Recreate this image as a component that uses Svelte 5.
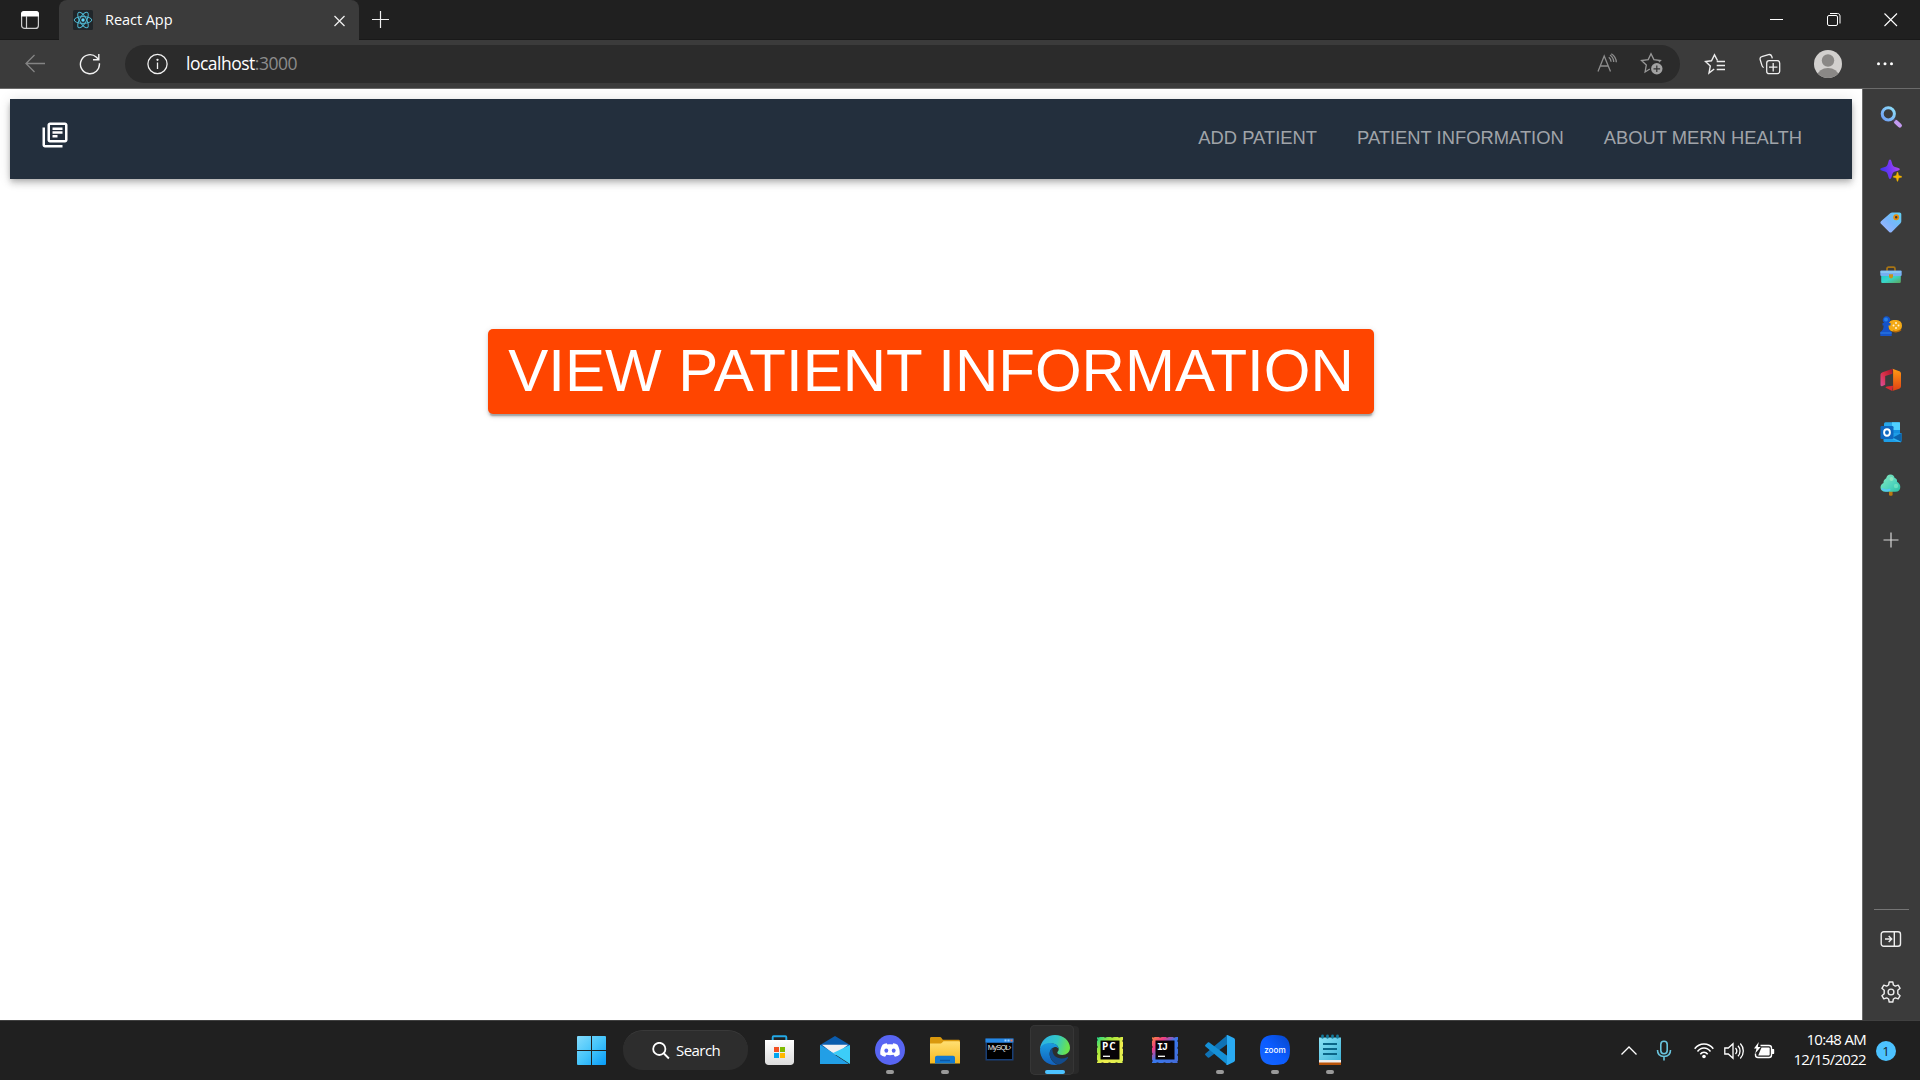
<script>
  const links = ['Add Patient', 'Patient Information', 'About MERN Health'];
  const sideApps = ['search', 'discover', 'shopping', 'tools', 'games', 'office', 'outlook', 'drop', 'add'];
  const taskApps = [
    { id: 'store' },
    { id: 'mail' },
    { id: 'discord', open: true },
    { id: 'files', open: true },
    { id: 'mysql' },
    { id: 'edge', active: true },
    { id: 'pycharm' },
    { id: 'intellij' },
    { id: 'vscode', open: true },
    { id: 'zoom', open: true },
    { id: 'notepad', open: true }
  ];
</script>

{#snippet sideIcon(id)}
  <svg width="24" height="24" viewBox="0 0 24 24" fill="none">
    {#if id === 'search'}
      <defs><linearGradient id="sg" x1="0" y1="1" x2="1" y2="0"><stop stop-color="#6f9df5" /><stop offset="1" stop-color="#8fe0fa" /></linearGradient></defs>
      <path d="M17 17l3.800 3.600" stroke="#c39af0" stroke-width="4.200" stroke-linecap="round" />
      <path d="M14 14l2 1.900" stroke="#4a4560" stroke-width="3" />
      <circle cx="9.300" cy="8.800" r="6.100" stroke="url(#sg)" stroke-width="3" />
    {:else if id === 'discover'}
      <defs><linearGradient id="dg" x1="0" y1=".6" x2="1" y2=".4"><stop stop-color="#3a35ef" /><stop offset=".5" stop-color="#7437f5" /><stop offset="1" stop-color="#b04af0" /></linearGradient></defs>
      <path d="M11 .5c1 0 1.300 1 2 3.700.6 2.400 1.400 3.300 4 4 2.700.7 3.700 1 3.700 2s-1 1.300-3.700 2c-2.600.7-3.400 1.600-4 4-.7 2.700-1 3.700-2 3.700s-1.300-1-2-3.700c-.6-2.400-1.400-3.300-4-4-2.700-.7-3.700-1-3.700-2s1-1.300 3.700-2c2.600-.7 3.400-1.600 4-4C9.700 1.500 10 .5 11 .5z" fill="url(#dg)" />
      <path d="M18.500 13c.6 0 .8 3 1.300 3.500.5.500 3.200.7 3.200 1.300s-2.700.8-3.200 1.300c-.5.500-.7 3.400-1.300 3.400s-.8-2.900-1.300-3.400c-.5-.5-3.200-.7-3.200-1.300s2.700-.8 3.200-1.300c.5-.5.7-3.500 1.300-3.500z" fill="#f4b400" stroke="#f4b400" stroke-width=".4" />
    {:else if id === 'shopping'}
      <defs><linearGradient id="tg" x1="1" y1="0" x2="0" y2="1"><stop stop-color="#5fd0ee" /><stop offset=".5" stop-color="#78b5fb" /><stop offset="1" stop-color="#a9b5ff" /></linearGradient></defs>
      <path d="M13.200 2.500h7.300c1 0 1.800.8 1.800 1.800v7c0 .8-.2 1.300-.8 1.900l-8.700 8.700c-.8.800-1.800.8-2.600 0L2 13.800c-.8-.8-.8-1.800 0-2.600l9.200-8c.6-.5 1.200-.7 2-.7z" fill="url(#tg)" />
      <circle cx="17.200" cy="7.200" r="2.100" fill="#3b3b3b" stroke="#e88d08" stroke-width="1.700" />
    {:else if id === 'tools'}
      <defs><linearGradient id="bg" x1="0" y1="0" x2="1" y2="1"><stop stop-color="#1fc9d4" /><stop offset=".5" stop-color="#38d6c9" /><stop offset="1" stop-color="#5da65a" /></linearGradient></defs>
      <path d="M8 8V5.800c0-1 .6-1.600 1.600-1.600h4.800c1 0 1.600.6 1.600 1.600V8" stroke="#a87414" stroke-width="1.700" />
      <path d="M2.200 11h19.600v7.700c0 .8-.5 1.300-1.300 1.300h-17c-.8 0-1.300-.5-1.300-1.300z" fill="url(#bg)" />
      <rect x="1.300" y="7.500" width="21.400" height="5.500" rx="1" fill="#76aef2" />
      <path d="M1.600 9h20" stroke="#8ccdf4" stroke-width="1.500" />
      <path d="M10 11.300h4v2.200a2 2 0 0 1-4 0z" fill="#ca911a" />
    {:else if id === 'games'}
      <rect x="9" y="5" width="14" height="11.500" rx="5.500" fill="#f3a916" />
      <path d="M14 16c2 1 6 1 8-1.500" stroke="#bb6c07" stroke-width="1.500" />
      <g fill="#fff3cf"><circle cx="17" cy="8" r="1" /><circle cx="17" cy="13" r="1" /><circle cx="14.500" cy="10.500" r="1" /><circle cx="19.500" cy="10.500" r="1" /></g>
      <path d="M3.500 8h1.700a3.800 3.800 0 1 1 4.600 0h1.700v2.500h-2c0 3.500.7 5 3.200 6.500v4H1.300v-4c2.500-1.500 3.300-3 3.300-6.500H3.500z" fill="#1553c9" />
      <circle cx="7" cy="4.500" r="2" fill="#2480e8" />
      <path d="M1.300 18h11.400" stroke="#2672df" stroke-width="1.500" />
    {:else if id === 'office'}
      <defs><linearGradient id="og" x1="0" y1="1" x2="1" y2="0"><stop stop-color="#d94f9d" /><stop offset=".5" stop-color="#d92f46" /><stop offset="1" stop-color="#a0142b" /></linearGradient><linearGradient id="og2" x1="0" y1="0" x2="0" y2="1"><stop stop-color="#ff9b12" /><stop offset="1" stop-color="#df3f14" /></linearGradient></defs>
      <path d="M13.500.8L3.600 4.200C2.300 4.600 1.500 5.500 1.500 7v9.500c0 1.400.7 2 2 1.500l2.700-1.200V8l7.300-2.300z" fill="url(#og)" />
      <path d="M6.300 19.500l6.900 3.400.9-5.200-6.400.8z" fill="#d92b35" />
      <path d="M13.500.8l6.800 2.400c1 .4 1.700 1.200 1.700 2.300v12.800c0 1.200-.7 2-1.800 2.400l-7 2.200c.7-.5.900-1 .9-2V3c0-1-.1-1.700-.6-2.200z" fill="url(#og2)" />
    {:else if id === 'outlook'}
      <rect x="5" y="2.300" width="16" height="17" rx="1.500" fill="#28a8ea" />
      <path d="M13 2.300h8v8h-8z" fill="#50d0ff" /><path d="M13 10h8v5h-8z" fill="#1490df" />
      <path d="M4.500 13h18v7.500c0 1-.6 1.600-1.600 1.600H6c-1 0-1.500-.6-1.500-1.600z" fill="#1d9ee8" />
      <path d="M22.500 13v9L14 17.500z" fill="#0a64ad" /><path d="M4.500 15l17 7" stroke="#35b8f1" />
      <rect x="1.500" y="6" width="13" height="13" rx="1.200" fill="#0f68c0" />
      <ellipse cx="8" cy="12.500" rx="2.900" ry="3.200" stroke="#fff" stroke-width="1.900" />
    {:else if id === 'drop'}
      <defs><linearGradient id="trg" x1="0" y1="0" x2="1" y2="1"><stop stop-color="#8beabc" /><stop offset=".6" stop-color="#4ed4bd" /><stop offset="1" stop-color="#2cbfa0" /></linearGradient></defs>
      <rect x="10" y="16" width="3.600" height="6.800" rx="1.200" fill="#b87812" />
      <path d="M11.500 1.500c2.300 0 3.800 1.300 4 3.300 2 .7 2.900 2.200 2.500 4 2 1 3.300 3 3.300 5.200 0 2.800-1.800 4.800-4.800 4.800H6.300C3.400 18.800 1.500 17 1.500 14.500c0-2.200 1.200-3.900 3-4.600-.2-2 .7-3.500 2.700-4.600.4-2.300 2-3.800 4.300-3.800z" fill="url(#trg)" />
      <path d="M3.500 16c2 2 5 1.500 7 .7" stroke="#57c8f2" stroke-width="2" stroke-linecap="round" />
      <circle cx="12.500" cy="6" r="2" fill="#aef2c6" opacity=".6" /><circle cx="17" cy="13" r="2.200" fill="#83edc8" opacity=".6" />
    {:else}
      <path d="M12 4.500v15M4.500 12h15" stroke="#d8d8d8" stroke-width="1.200" />
    {/if}
  </svg>
{/snippet}

{#snippet taskIcon(id)}
  <svg width="32" height="32" viewBox="0 0 32 32" fill="none">
    {#if id === 'store'}
      <defs><linearGradient id="stg" x1="0" y1="0" x2="0" y2="1"><stop stop-color="#fff" /><stop offset="1" stop-color="#dcdcdc" /></linearGradient></defs>
      <path d="M8.700 7.500V3.200c0-.6.300-.9.900-.9h11.800c.6 0 .9.300.9.900v4.300" stroke="#23a9e6" stroke-width="1.900" />
      <path d="M1 6h29v21.500c0 2-1.500 3.500-3.500 3.500h-22C2.500 31 1 29.500 1 27.500z" fill="url(#stg)" />
      <path fill="#f25022" d="M10 13h5v5h-5z" /><path fill="#7fba00" d="M16 13h5v5h-5z" /><path fill="#00a4ef" d="M10 19h5v5h-5z" /><path fill="#ffb900" d="M16 19h5v5h-5z" />
    {:else if id === 'mail'}
      <path d="M1 11L16 2 31 11v6H1z" fill="#0b5cad" />
      <path d="M3 10.800h26L16 21z" fill="#f2f0f2" />
      <path d="M1 11l15 9-15 10z" fill="#27a8ec" /><path d="M31 11v19L14 19z" fill="#3ccdf8" />
      <path d="M1 30V11l29 19z" fill="#229fe6" />
    {:else if id === 'discord'}
      <circle cx="16" cy="16" r="15" fill="#5865f2" />
      <path d="M12.800 9.200c-1.700.3-3.200.8-4.300 1.500-1.700 2.800-2.500 6-2.200 9.700 1.300 1.100 2.900 1.900 4.800 2.400l1.300-2c2.300.5 4.900.5 7.200 0l1.300 2c1.900-.5 3.500-1.300 4.800-2.400.3-3.700-.5-6.900-2.200-9.700-1.100-.7-2.600-1.200-4.300-1.500l-.7 1.300c-1.700-.2-3.300-.2-5 0z" fill="#fff" />
      <ellipse cx="12.300" cy="16.600" rx="1.900" ry="2.200" fill="#5865f2" /><ellipse cx="19.700" cy="16.600" rx="1.900" ry="2.200" fill="#5865f2" />
    {:else if id === 'files'}
      <defs><linearGradient id="fg" x1="0" y1="0" x2="0" y2="1"><stop stop-color="#ffdf73" /><stop offset="1" stop-color="#f7b91e" /></linearGradient></defs>
      <path d="M1 12V4.500C1 3.500 1.500 3 2.500 3h8c1 0 1.500.3 2 1l1.300 1.700h15.700c1 0 1.500.5 1.500 1.500V12z" fill="#d9980d" />
      <path d="M1 9.500h10c1 0 1.500-.3 2.200-1l1.300-1.300h15c1 0 1.500.5 1.500 1.500v20.800H1z" fill="url(#fg)" />
      <path d="M6 29.500v-5.800c0-1.200.8-2 2-2h16c1.200 0 2 .8 2 2v5.800z" fill="#1379d1" /><path d="M11 26.500h10" stroke="#0b58a5" stroke-width="1.500" />
    {:else if id === 'mysql'}
      <rect x="1.500" y="4.500" width="28" height="22" fill="#183e76" /><path d="M1.500 4.500h28v4h-28z" fill="#2588e5" />
      <rect x="3" y="9" width="25" height="16" fill="#000" />
      <path d="M20.500 5.500h2v2h-2zM23.500 5.500h2v2h-2z" fill="#9ed0ff" /><path d="M26.500 5.500h2v2h-2z" fill="#f0744f" />
      <text x="3.800" y="16.300" font-family="Liberation Sans, sans-serif" font-size="7.500" fill="#eee" textLength="23.500">MySQL›</text>
    {:else if id === 'edge'}
      <defs>
        <linearGradient id="e1" x1="0" y1="0" x2="1" y2=".2"><stop stop-color="#2baeea" /><stop offset=".6" stop-color="#33c8c6" /><stop offset="1" stop-color="#69e24f" /></linearGradient>
        <linearGradient id="e2" x1="0" y1="0" x2="0" y2="1"><stop stop-color="#1a9ce0" /><stop offset="1" stop-color="#1160bd" /></linearGradient>
      </defs>
      <path d="M1 15C1.700 7 8 1 16 1c8.500 0 15 6 15 12.800 0 4.500-3.400 7.200-7.700 7.200-3.300 0-5-1.200-5-2.300 0-.8 1.400-1.500 1.400-3.700 0-3.200-3-5.600-7.200-5.600C7 9.400 3 11.600 1 15z" fill="url(#e1)" />
      <path d="M1 16c0-4.500 5-7 10-7 5.500 0 8.500 3 8.500 5.700-1-1.400-2.700-2-4.300-1.500-3 .8-5 3.800-4.500 7.800.6 4.700 4.300 8.800 8.800 9.600C9.500 33 1 25.500 1 16z" fill="url(#e2)" />
      <path d="M13.500 14c-2.800 1.800-3.500 5.300-2.300 8.800 1.500 4.400 5.300 7.600 9 7.600 3.400-1 6.600-3.400 8.700-6.500.4-.6-.1-1-.7-.7-6.700 3.200-15.700.5-14.700-9.200z" fill="#124b8c" />
    {:else if id === 'pycharm' || id === 'intellij'}
      <defs>
        <linearGradient id="pcg" x1="0" y1="0" x2="1" y2="1"><stop stop-color="#20d58b" /><stop offset=".3" stop-color="#a5e83a" /><stop offset=".6" stop-color="#f0ee4d" /><stop offset="1" stop-color="#d9ef50" /></linearGradient>
        <linearGradient id="ijg" x1="0" y1="0" x2="1" y2="1"><stop stop-color="#fa8740" /><stop offset=".25" stop-color="#ef3d83" /><stop offset=".5" stop-color="#3878ee" /><stop offset="1" stop-color="#456bd8" /></linearGradient>
      </defs>
      {#if id === 'pycharm'}
        <path d="M3 3h26v26H3z" fill="url(#pcg)" />
      {:else}
        <path d="M3 3h26v26H3z" fill="url(#ijg)" />
      {/if}
      <path d="M3.300 3.300h25.400v25.400H3.300z" stroke="#151515" stroke-width=".6" stroke-dasharray="2 5" />
      <path d="M6.500 6.500h19v19h-19z" fill="#070407" />
      <text x="8" y="16" font-family={id === 'pycharm' ? 'Open Sans, sans-serif' : 'Liberation Mono, monospace'} font-size="10" font-weight="700" fill="#fff" textLength={id === 'pycharm' ? 13.5 : 11}>{id === 'pycharm' ? 'PC' : 'IJ'}</text>
      <path d="M9 22.300h7" stroke="#fff" stroke-width="1.300" />
    {:else if id === 'vscode'}
      <path d="M23.500 1v9L5.300 23.500c-.5.400-1 .3-1.500-.1L1.500 21.300c-.6-.6-.6-1.200 0-1.800z" fill="#0f72b5" />
      <path d="M23.500 31v-9L5.300 8.500c-.5-.4-1-.3-1.500.1L1.500 10.700c-.6.6-.6 1.200 0 1.800z" fill="#1590d6" />
      <path d="M23.500 1l6.300 3c.8.400 1.200 1 1.200 1.900v20.200c0 .9-.4 1.500-1.200 1.900l-6.300 3c-.8.300-1.500 0-2-.5.800.5 1.500 0 1.500-1V2.500c0-1-.8-1.500-1.500-1 .5-.5 1.200-.8 2-.5z" fill="#2aaaf2" />
    {:else if id === 'zoom'}
      <defs><linearGradient id="zg" x1="1" y1="0" x2="0" y2="1"><stop stop-color="#0646c8" /><stop offset=".5" stop-color="#0b5cff" /><stop offset="1" stop-color="#1767ff" /></linearGradient></defs>
      <path d="M16 1c11 0 15 4 15 15s-4 15-15 15S1 27 1 16 5 1 16 1z" fill="url(#zg)" />
      <text x="5.200" y="18.600" font-family="Inter, sans-serif" font-size="7.600" font-weight="500" fill="#fff" textLength="21.500" lengthAdjust="spacingAndGlyphs">zoom</text>
    {:else if id === 'notepad'}
      <defs><linearGradient id="ng" x1="0" y1="0" x2="1" y2="1"><stop stop-color="#8be3f6" /><stop offset="1" stop-color="#3eb4d8" /></linearGradient></defs>
      <path d="M5 28h22v3H5z" fill="#b75309" /><path d="M5 26h22v2.500H5z" fill="#eee" />
      <path d="M5 3.500h22V26H5z" fill="url(#ng)" />
      <path d="M8.500 1.800v1.500M13.500 1.800v1.500M18.500 1.800v1.500M23.500 1.800v1.500" stroke="#137a9c" stroke-width="2.700" stroke-linecap="round" />
      <path d="M9 10h14M9 15h14M9 20h14" stroke="#0b6688" stroke-width="1.800" />
    {/if}
  </svg>
{/snippet}

<div class="screen">
  <div class="tabstrip">
    <div class="workspace">
      <svg width="20" height="20" viewBox="0 0 20 20" fill="none">
        <rect x="1.600" y="1.600" width="16.800" height="16.800" rx="3" stroke="#cfcfcf" stroke-width="1.200" />
        <path d="M1 6.500V4c0-2 1-3 3-3h12c2 0 3 1 3 3v2.500z" fill="#fff" /><path d="M6.500 6v12" stroke="#cfcfcf" stroke-width="1.200" />
      </svg>
    </div>
    <div class="tab">
      <svg class="favicon" width="20" height="20" viewBox="0 0 20 20" fill="none">
        <rect width="20" height="20" rx="1.500" fill="#20262a" />
        <g stroke="#4fb8d2" stroke-width="1"><ellipse cx="10" cy="10" rx="8.800" ry="3.400" /><ellipse cx="10" cy="10" rx="8.800" ry="3.400" transform="rotate(60 10 10)" /><ellipse cx="10" cy="10" rx="8.800" ry="3.400" transform="rotate(120 10 10)" /></g>
        <circle cx="10" cy="10" r="1.700" fill="#61dafb" />
      </svg>
      <span class="title">React App</span>
      <svg class="close" width="12" height="12" viewBox="0 0 12 12"><path d="M.5 1l10 10M10.500 1L.5 11" stroke="#eee" stroke-width="1.300" /></svg>
    </div>
    <svg class="newtab" width="18" height="18" viewBox="0 0 18 18"><path d="M9.500 0v17M1 8.500h17" stroke="#f0f0f0" stroke-width="1.200" /></svg>
    <div class="controls">
      <svg width="14" height="14" viewBox="0 0 14 14"><path d="M0 6.500h13" stroke="#fff" /></svg>
      <svg width="14" height="14" viewBox="0 0 14 14" fill="none" stroke="#fff"><rect x=".5" y="2.500" width="10" height="10" rx="1.500" /><path d="M3 .5h7.500c1.500 0 2.500 1 2.500 2.500V10.500" /></svg>
      <svg width="14" height="14" viewBox="0 0 14 14"><path d="M.5.500l12.500 12.500M13 .5L.5 13" stroke="#fff" stroke-width="1.100" /></svg>
    </div>
  </div>

  <div class="toolbar">
    <svg class="back" width="22" height="22" viewBox="0 0 22 22" fill="none" stroke="#848484" stroke-width="1.300"><path d="M21 10.500H2M10.500 2L2 10.500l8.500 8.500" /></svg>
    <svg class="reload" width="22" height="22" viewBox="0 0 22 22" fill="none" stroke="#f2f2f2" stroke-width="1.400"><path d="M20.400 10.200A9.500 9.500 0 1 1 17.500 4.300L19.500 6.500M19.800 1v5.800H14" /></svg>
    <div class="address">
      <svg width="22" height="22" viewBox="0 0 22 22" fill="none" stroke="#f0f0f0" stroke-width="1.300"><circle cx="11.500" cy="11" r="9.600" /><path d="M11.500 9.500v6.500" /><circle cx="11.500" cy="6.800" r=".5" fill="#fff" /></svg>
      <span class="url">localhost<span>:3000</span></span>
      <svg class="read" width="22" height="22" viewBox="0 0 22 22" fill="none" stroke="#8d8d8d" stroke-width="1.300"><path d="M1 18.500L7.200 3 13.500 18.500M3.300 13h7.800M11.800 4.200c1.500 1.200 2.200 2.700 2.300 4.500M13 2c2.300 1.500 3.600 3.800 3.700 7M14.300.8c3.200 2 4.900 5 5 8.500" /></svg>
      <svg width="24" height="24" viewBox="0 0 24 24" fill="none"><path d="M9.800 17l-4.700 3 1.200-7L1.500 8.500l6.700-.9L11 1.800l2.900 5.800 6.500.9-1.500 1.400" stroke="#999" stroke-width="1.300" /><circle cx="16.800" cy="16.800" r="5.700" fill="#a2a2a2" /><path d="M16.800 13.500v6.600M13.500 16.800h6.600" stroke="#333" stroke-width="1.200" /></svg>
    </div>
    <svg class="fav" width="22" height="22" viewBox="0 0 22 22" fill="none" stroke="#eee" stroke-width="1.400"><path d="M10.200 16l-5.200 4 1.300-7L1.500 8.500l6-.7L10.500 1.800l3 5.700M12.700 8.500H21M12.700 12.500H21M12.700 16.500H21" /></svg>
    <svg class="collect" width="22" height="22" viewBox="0 0 22 22" fill="none" stroke="#eee" stroke-width="1.300"><rect x="7.700" y="7.700" width="13" height="13" rx="2.500" /><path d="M14.200 10v8.400M10 14.200h8.400M4.800 14.500c-1-.3-1.500-1-1.800-1.900L1.200 6.700c-.4-1.400.2-2.600 1.600-3L9.500 1.600c1.600-.4 2.700.2 3.300 1.900l.5 1.800" /></svg>
    <svg class="avatar" width="28" height="28" viewBox="0 0 28 28"><defs><clipPath id="face"><circle cx="14" cy="14" r="14" /></clipPath></defs><g clip-path="url(#face)"><path fill="#d2d0ce" d="M0 0h28v28H0z" /><circle cx="14" cy="10.500" r="6.200" fill="#8a8886" /><ellipse cx="14" cy="25.500" rx="10.500" ry="7.500" fill="#8a8886" /></g></svg>
    <svg class="more" width="18" height="6" viewBox="0 0 18 6" fill="#fff"><circle cx="2.500" cy="2.800" r="1.500" /><circle cx="9" cy="2.800" r="1.500" /><circle cx="15.500" cy="2.800" r="1.500" /></svg>
  </div>

  <div class="middle">
    <div class="page">
      <header class="appbar">
        <svg class="brand" width="30" height="30" viewBox="0 0 24 24" fill="#fff"><path d="M4 6H2v14c0 1.100.9 2 2 2h14v-2H4V6zm16-4H8c-1.100 0-2 .9-2 2v12c0 1.100.9 2 2 2h12c1.100 0 2-.9 2-2V4c0-1.100-.9-2-2-2zm0 14H8V4h12v12zM10 9h8v2h-8zm0 3h4v2h-4zm0-6h8v2h-8z" /></svg>
        <nav>
          {#each links as link}<button class="link">{link}</button>{/each}
        </nav>
      </header>
      <button class="cta">View Patient Information</button>
    </div>
    <aside>
      {#each sideApps as app}<div class="side-cell {app}">{@render sideIcon(app)}</div>{/each}
      <div class="side-foot">
        <div class="side-cell"><svg width="22" height="18" viewBox="0 0 22 18" fill="none" stroke="#eee" stroke-width="1.400"><rect x="1.200" y="1.700" width="19.300" height="14.600" rx="2.500" /><path d="M14.300 2v14M5 9h6.500M8.700 6l3 3-3 3" /></svg></div>
        <div class="side-cell"><svg width="24" height="24" viewBox="0 0 24 24" fill="none" stroke="#eee" stroke-width="1.400" stroke-linejoin="round"><circle cx="12" cy="12" r="2.900" /><path d="M10.200 2h3.600l.6 3 1.900 1.100 2.900-1 1.900 3.200-2.300 2v3.400l2.300 2-1.900 3.200-2.900-1-1.900 1.100-.6 3h-3.600l-.6-3-1.900-1.100-2.900 1-1.900-3.200 2.300-2v-3.400l-2.300-2 1.900-3.200 2.900 1L9.600 5z" /></svg></div>
      </div>
    </aside>
  </div>

  <footer class="taskbar">
    <svg class="start" width="29" height="29" viewBox="0 0 29 29"><defs><linearGradient id="wg" x1="0" y1="0" x2="29" y2="29" gradientUnits="userSpaceOnUse"><stop stop-color="#84dcfc" /><stop offset=".5" stop-color="#45c5fb" /><stop offset="1" stop-color="#079bf8" /></linearGradient></defs><path fill="url(#wg)" d="M0 1q0-1 1-1h13v14H0zM15 0h13q1 0 1 1v13H15zM0 15h14v14H1q-1 0-1-1zM15 15h14v13q0 1-1 1H15z" /></svg>
    <div class="search-pill">
      <svg width="18" height="18" viewBox="0 0 18 18" fill="none" stroke="#fff" stroke-width="1.800"><circle cx="7.300" cy="6.900" r="6.100" /><path d="M11.900 11.500l5 5" /></svg>
      <span>Search</span>
    </div>
    <div class="apps">
      {#each taskApps as app}
        <div class="app" class:open={app.open} class:active={app.active}>{@render taskIcon(app.id)}</div>
      {/each}
    </div>
    <div class="tray">
      <svg width="16" height="10" viewBox="0 0 16 10" fill="none" stroke="#fff" stroke-width="1.300"><path d="M.5 8.500L8 1l7.500 7.500" /></svg>
      <svg class="mic" width="16" height="22" viewBox="0 0 16 22" fill="none" stroke="#69c3dc" stroke-width="1.600"><rect x="4.800" y="1.300" width="6.400" height="12.500" rx="3.200" /><path d="M1.500 10c0 4 2.500 6.500 6.500 6.500s6.500-2.500 6.500-6.500M8 16.500v4" /></svg>
      <svg class="wifi" width="20" height="16" viewBox="0 0 20 16" fill="none" stroke="#fff" stroke-width="1.500"><path d="M.7 5.700C5.500-.7 14.500-.7 19.300 5.700M3.500 8.500c3.500-4.700 9.500-4.700 13 0M6.300 11.200c2-2.700 5.400-2.700 7.400 0" /><circle cx="10" cy="13.500" r="1.800" fill="#fff" stroke="none" /></svg>
      <svg class="speaker" width="20" height="18" viewBox="0 0 20 18" fill="none" stroke="#fff" stroke-width="1.300"><path d="M.8 6v6h3.500l4.700 4.300V1.700L4.300 6zM11.500 6c1.500 1.700 1.500 4.300 0 6M14 3.700c2.700 3 2.700 7.600 0 10.600M16.300 1.500c4 4.300 4 10.700 0 15" /></svg>
      <svg class="battery" width="21" height="18" viewBox="0 0 21 18" fill="none"><path d="M6.500 3.500H15c1.700 0 2.500.8 2.500 2.500v7c0 1.700-.8 2.500-2.500 2.500H4c-1.700 0-2.500-.8-2.500-2.500v-1.500" stroke="#fff" stroke-width="1.400" /><path d="M7.500 5.500h7.300c.6 0 .9.300.9.900v6.200c0 .6-.3.900-.9.900H4.200z" fill="#fff" /><path d="M18 7h1.200c.8 0 1 .4 1 1v3c0 .6-.2 1-1 1H18z" fill="#fff" /><path d="M4.800 0L0 6.500h2.500L1.200 11.500 6.700 4.900H3.800z" fill="#fff" /></svg>
      <div class="clock"><span>10:48 AM</span><span>12/15/2022</span></div>
      <span class="badge">1</span>
    </div>
  </footer>
</div>

<style>
  :global(body) { margin: 0; background: #fff; }
  .screen { width: 1920px; height: 1086px; display: flex; flex-direction: column; overflow: hidden; background: #fff; font-family: 'Open Sans', 'Noto Sans', sans-serif; }
  svg { display: block; flex: none; }
  button { border: 0; cursor: pointer; text-transform: uppercase; font-family: 'Liberation Sans', Arial, sans-serif; white-space: nowrap; }

  .tabstrip { height: 40px; flex: none; display: flex; align-items: center; background: #202020; box-shadow: inset 0 -1px #191919; }
  .workspace { width: 59px; height: 40px; box-sizing: border-box; padding: 10px 0 0 20px; }
  .tab { width: 300px; height: 40px; box-sizing: border-box; padding: 0 13px 0 14px; display: flex; align-items: center; background: #3b3b3b; border-radius: 8px 8px 0 0; color: #fff; font-size: 14.500px; }
  .title { flex: 1; margin-left: 12px; padding-bottom: 2px; letter-spacing: -0.050px; }
  .close { margin-top: 1px; }
  .newtab { margin-left: 12px; }
  .controls { margin-left: auto; margin-right: 22px; display: flex; gap: 43px; }

  .toolbar { height: 49px; flex: none; box-sizing: border-box; display: flex; align-items: center; background: #3b3b3b; border-bottom: 1px solid #6b6b6b; }
  .back { margin-left: 24px; }
  .reload { margin-left: 33px; }
  .address { width: 1555px; height: 38px; margin-left: 24px; box-sizing: border-box; padding: 0 16px 0 21px; display: flex; align-items: center; background: #2b2b2b; border-radius: 19px; }
  .url { flex: 1; margin-left: 18px; padding-bottom: 2px; color: #fff; font-size: 17.500px; letter-spacing: -0.500px; line-height: 36px; }
  .url span { color: #8c8c8c; }
  .read { margin-right: 21px; }
  .fav { margin-left: 24px; }
  .collect { margin-left: 33px; }
  .avatar { margin-left: 33px; }
  .more { margin-left: 34px; }

  .middle { height: 931px; flex: none; display: flex; }
  .page { width: 1862px; box-sizing: border-box; padding: 10px; display: flex; flex-direction: column; align-items: center; background: #fff; }
  .appbar { width: 100%; height: 80px; flex: none; box-sizing: border-box; padding: 0 30px; display: flex; align-items: center; justify-content: space-between; background: #232f3d; box-shadow: 0 2.500px 5px -1.250px rgba(0, 0, 0, .2), 0 5px 6.250px rgba(0, 0, 0, .14), 0 1.250px 12.500px rgba(0, 0, 0, .12); }
  .brand { margin-bottom: 8px; }
  nav { display: flex; margin-bottom: 2px; }
  .link { padding: 0 20px; background: none; color: #a0a4a9; font-size: 18.360px; line-height: 40px; }
  .cta { width: 886px; height: 85px; margin-top: 150px; padding: 0 0 2px; background: #ff4500; color: #fff; border-radius: 5px; font-size: 60px; line-height: 83px; box-shadow: 0 3.750px 1.250px -2.500px rgba(0, 0, 0, .2), 0 2.500px 2.500px rgba(0, 0, 0, .14), 0 1.250px 6.250px rgba(0, 0, 0, .12); }

  aside { width: 58px; box-sizing: border-box; padding: 2px 1px 0 0; display: flex; flex-direction: column; background: #3b3b3b; border-left: 1px solid #6b6b6b; }
  .side-cell { height: 52.500px; display: flex; align-items: center; justify-content: center; }
  .discover { box-sizing: border-box; padding-top: 3px; }
  .add { padding-top: 3px; }
  .side-foot { margin-top: auto; padding-bottom: 2px; }
  .side-foot::before { content: ''; display: block; width: 35px; height: 1px; margin: 0 auto 3px 11px; background: #757575; }

  .taskbar { height: 60px; flex: none; box-sizing: border-box; border-top: 1px solid #404040; display: flex; align-items: center; background: #202020; color: #fff; }
  .start { margin-left: 577px; }
  .search-pill { width: 125px; height: 40px; margin: 0 0 1px 17px; box-sizing: border-box; border-top: 1px solid #393939; border-radius: 20px; background: #2d2d2d; display: flex; align-items: center; padding-left: 29px; gap: 6px; font-size: 15px; }
  .search-pill span { letter-spacing: -0.550px; padding-bottom: 1px; }
  .apps { display: flex; margin-left: 4px; }
  .app { position: relative; width: 55px; height: 59px; display: flex; align-items: center; justify-content: center; }
  .app svg { position: relative; margin: 0 0 1px 1px; }
  .open::after, .active::after { content: ''; position: absolute; bottom: 6px; left: 23.500px; width: 8px; height: 4px; border-radius: 2px; background: #9a9a9a; }
  .active::after { left: 18px; width: 20px; background: #4cc2ff; }
  .active::before { content: ''; position: absolute; top: 4px; left: 2.500px; width: 44px; height: 50px; border-radius: 5px; background: #2d2d2d; box-shadow: inset 0 0 0 1px #363636, 6px 0 0 -1px #292929; }
  .tray { margin-left: auto; margin-right: 24px; display: flex; align-items: center; }
  .mic { margin-left: 19px; }
  .wifi { margin-left: 22px; }
  .speaker { margin-left: 10px; }
  .battery { margin-left: 10px; }
  .clock { width: 91px; margin-bottom: 4px; display: flex; flex-direction: column; align-items: flex-end; font-size: 15px; line-height: 20px; letter-spacing: -0.700px; }
  .badge { width: 20px; height: 20px; margin-left: 10px; border-radius: 50%; background: #4cc2ff; color: #15232d; font-size: 13px; line-height: 20px; text-align: center; }
</style>
